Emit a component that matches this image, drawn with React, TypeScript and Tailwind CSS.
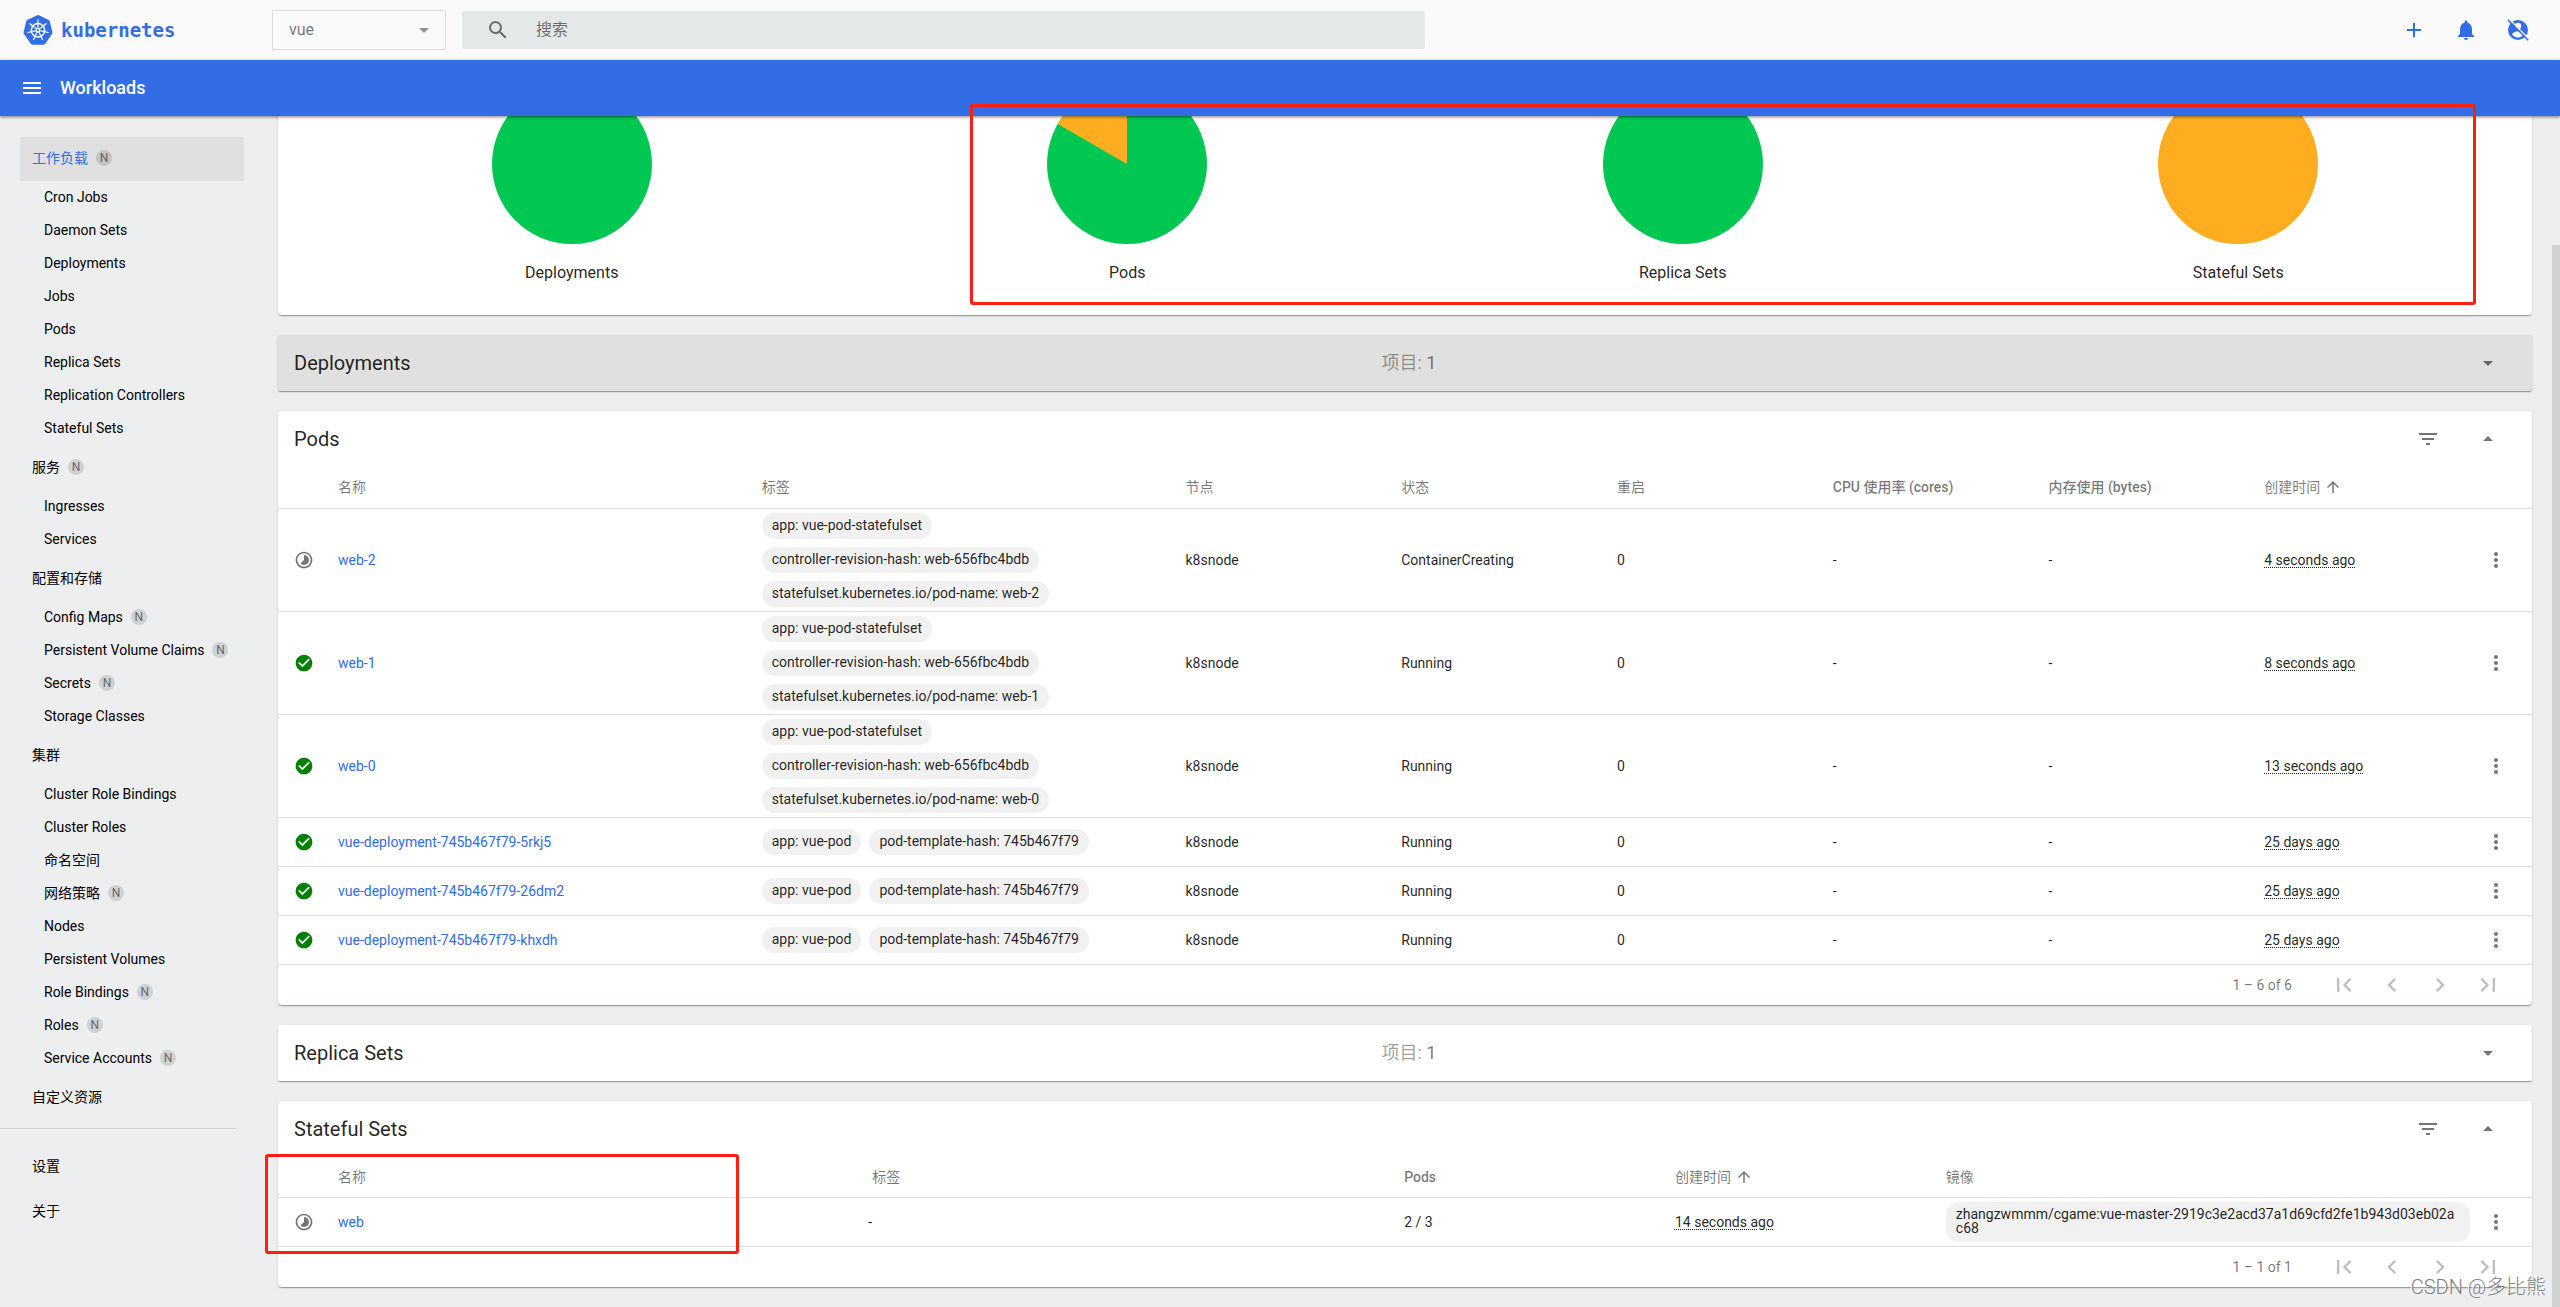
import type { ReactNode } from "react";
import {
  MdAdd,
  MdArrowDropDown,
  MdArrowDropUp,
  MdArrowUpward,
  MdCheckCircle,
  MdChevronLeft,
  MdChevronRight,
  MdFilterList,
  MdFirstPage,
  MdLastPage,
  MdMenu,
  MdMoreVert,
  MdNotifications,
  MdSearch,
  MdTimelapse,
} from "react-icons/md";

type NavItem = { label: string; namespaced?: boolean };
type NavGroup = NavItem & { active?: boolean; items: NavItem[] };

const navGroups: NavGroup[] = [
  {
    label: "工作负载",
    namespaced: true,
    active: true,
    items: [
      { label: "Cron Jobs" },
      { label: "Daemon Sets" },
      { label: "Deployments" },
      { label: "Jobs" },
      { label: "Pods" },
      { label: "Replica Sets" },
      { label: "Replication Controllers" },
      { label: "Stateful Sets" },
    ],
  },
  {
    label: "服务",
    namespaced: true,
    items: [{ label: "Ingresses" }, { label: "Services" }],
  },
  {
    label: "配置和存储",
    items: [
      { label: "Config Maps", namespaced: true },
      { label: "Persistent Volume Claims", namespaced: true },
      { label: "Secrets", namespaced: true },
      { label: "Storage Classes" },
    ],
  },
  {
    label: "集群",
    items: [
      { label: "Cluster Role Bindings" },
      { label: "Cluster Roles" },
      { label: "命名空间" },
      { label: "网络策略", namespaced: true },
      { label: "Nodes" },
      { label: "Persistent Volumes" },
      { label: "Role Bindings", namespaced: true },
      { label: "Roles", namespaced: true },
      { label: "Service Accounts", namespaced: true },
    ],
  },
  { label: "自定义资源", items: [] },
];

const charts = [
  { label: "Deployments", pending: 0 },
  { label: "Pods", pending: 1 / 6 },
  { label: "Replica Sets", pending: 0 },
  { label: "Stateful Sets", pending: 1 },
];

const statefulLabels = (name: string) => [
  "app: vue-pod-statefulset",
  "controller-revision-hash: web-656fbc4bdb",
  `statefulset.kubernetes.io/pod-name: ${name}`,
];
const deploymentLabels = ["app: vue-pod", "pod-template-hash: 745b467f79"];

const pods = [
  { name: "web-2", labels: statefulLabels("web-2"), stacked: true, status: "ContainerCreating", age: "4 seconds ago" },
  { name: "web-1", labels: statefulLabels("web-1"), stacked: true, status: "Running", age: "8 seconds ago" },
  { name: "web-0", labels: statefulLabels("web-0"), stacked: true, status: "Running", age: "13 seconds ago" },
  { name: "vue-deployment-745b467f79-5rkj5", labels: deploymentLabels, status: "Running", age: "25 days ago" },
  { name: "vue-deployment-745b467f79-26dm2", labels: deploymentLabels, status: "Running", age: "25 days ago" },
  { name: "vue-deployment-745b467f79-khxdh", labels: deploymentLabels, status: "Running", age: "25 days ago" },
];

const cardShadow =
  "shadow-[0_2px_1px_-1px_rgba(0,0,0,0.2),0_1px_1px_0_rgba(0,0,0,0.14),0_1px_3px_0_rgba(0,0,0,0.12)]";

function KubernetesLogo() {
  const spokes = [0, 1, 2, 3, 4, 5, 6];
  return (
    <svg viewBox="0 0 30 30" className="size-[30px]" aria-hidden="true">
      <path
        d="M13.6 0.4Q15 -0.2 16.4 0.4L25.3 4.7Q26.5 5.3 26.9 6.7L29.3 16.7Q29.7 18.1 28.8 19.3L22.4 28.5Q21.5 29.7 20 29.7H10Q8.5 29.7 7.6 28.5L1.2 19.3Q0.3 18.1 0.7 16.7L3.1 6.7Q3.5 5.3 4.7 4.7Z"
        fill="#326de6"
      />
      <g fill="none" stroke="#fff" strokeLinecap="round">
        <circle cx="15" cy="15.2" r="6.7" strokeWidth="1.5" />
        {spokes.map((n) => (
          <path key={n} d="M15 13V4.8" strokeWidth="1.2" transform={`rotate(${(n * 360) / 7} 15 15.2)`} />
        ))}
        <circle cx="15" cy="15.2" r="1.7" strokeWidth="1.2" />
      </g>
    </svg>
  );
}

function UserOffIcon() {
  return (
    <svg viewBox="0 0 24 24" className="size-6" aria-hidden="true">
      <circle cx="12" cy="12" r="10" fill="#326de6" />
      <circle cx="12" cy="8" r="3.2" fill="#fafafa" />
      <path d="M6 16.2c1-1.9 4-2.9 6-2.9s5 1 6 2.9a7.2 7.2 0 0 1-12 0Z" fill="#fafafa" />
      <path d="M3.2 1.2 23.2 21.2" stroke="#fafafa" strokeWidth="1.6" />
      <path d="M1.8 1.8 22.2 22.2" stroke="#326de6" strokeWidth="1.6" />
    </svg>
  );
}

function NamespacedBadge() {
  return (
    <span className="ml-2 flex size-4 items-center justify-center rounded-full bg-black/12 text-xs leading-none text-black/54">
      N
    </span>
  );
}

function Sidebar() {
  return (
    <nav className="w-[258px] shrink-0 pt-5 text-sm text-black">
      {navGroups.map((group) => (
        <div key={group.label}>
          <a
            href="#"
            className={
              group.active
                ? "mt-px ml-5 mr-[14px] flex h-11 items-center rounded-xs bg-[#e0e0e0] pb-0.5 pl-3 text-[#326de6]"
                : "mt-px ml-5 mr-[14px] flex h-11 items-center pb-0.5 pl-3"
            }
          >
            {group.label}
            {group.namespaced && <NamespacedBadge />}
          </a>
          {group.items.map((item) => (
            <a key={item.label} href="#" className="flex h-[33px] items-center pb-0.5 pl-11">
              {item.label}
              {item.namespaced && <NamespacedBadge />}
            </a>
          ))}
        </div>
      ))}
      <hr className="mt-2 mr-[22px] mb-[14px] border-black/12" />
      <a href="#" className="flex h-[45px] items-center pl-8">设置</a>
      <a href="#" className="flex h-[45px] items-center pl-8">关于</a>
    </nav>
  );
}

function Pie({ pending }: { pending: number }) {
  const angle = -pending * 2 * Math.PI;
  const x = 80 + 80 * Math.sin(angle);
  const y = 80 - 80 * Math.cos(angle);
  return (
    <svg viewBox="0 0 160 160" className="size-40" aria-hidden="true">
      <circle cx="80" cy="80" r="80" fill={pending === 1 ? "#ffad20" : "#00c752"} />
      {pending > 0 && pending < 1 && <path d={`M80 80V0A80 80 0 0 0 ${x} ${y}Z`} fill="#ffad20" />}
    </svg>
  );
}

function Chip({ children }: { children: ReactNode }) {
  return (
    <span className="rounded-[13px] bg-[#f1f1f1] px-[10px] pt-[5px] pb-[7px] leading-[14px] break-all">
      {children}
    </span>
  );
}

function StatusIcon({ pending }: { pending: boolean }) {
  return pending ? (
    <MdTimelapse className="size-5 text-black/54" />
  ) : (
    <MdCheckCircle className="size-5 text-[#008000]" />
  );
}

function CollapsedCard({ title, hovered }: { title: string; hovered?: boolean }) {
  return (
    <section
      className={`flex h-14 shrink-0 items-center rounded-xs px-4 ${cardShadow} ${hovered ? "bg-[#e0e0e0]" : "bg-white"}`}
    >
      <h2 className="flex-1 text-xl">{title}</h2>
      <p className="ml-2 text-lg text-black/54">
        <span className="text-black/40">项目:</span> 1
      </p>
      <div className="flex flex-1 justify-end">
        <button type="button" aria-label={`展开 ${title}`} className="mr-4">
          <MdArrowDropDown className="size-6 text-black/54" />
        </button>
      </div>
    </section>
  );
}

function TableCard({ title, range, children }: { title: string; range: string; children: ReactNode }) {
  return (
    <section className={`shrink-0 rounded bg-white ${cardShadow}`}>
      <header className="flex h-14 items-center justify-between pr-8 pl-4">
        <h2 className="text-xl">{title}</h2>
        <div className="flex gap-9 text-black/54">
          <button type="button" aria-label="筛选">
            <MdFilterList className="size-6" />
          </button>
          <button type="button" aria-label={`收起 ${title}`}>
            <MdArrowDropUp className="size-6" />
          </button>
        </div>
      </header>
      {children}
      <footer className="flex h-10 items-center justify-end gap-5 pr-[30px] text-black/26">
        <span className="mr-[18px] text-sm text-black/54">{range}</span>
        <button type="button" aria-label="第一页">
          <MdFirstPage className="size-7" />
        </button>
        <button type="button" aria-label="上一页">
          <MdChevronLeft className="size-7" />
        </button>
        <button type="button" aria-label="下一页">
          <MdChevronRight className="size-7" />
        </button>
        <button type="button" aria-label="最后一页">
          <MdLastPage className="size-7" />
        </button>
      </footer>
    </section>
  );
}

function CreatedHeading() {
  return (
    <span className="flex items-center gap-1">
      创建时间
      <MdArrowUpward className="size-[18px]" />
    </span>
  );
}

function Age({ children }: { children: ReactNode }) {
  return <span className="underline decoration-dotted decoration-1 underline-offset-2">{children}</span>;
}

function MoreButton({ name }: { name: string }) {
  return (
    <button type="button" aria-label={`${name} 操作`} className="ml-1 block">
      <MdMoreVert className="size-6 text-black/54" />
    </button>
  );
}

function PodsTable() {
  return (
    <table className="w-full table-fixed text-left text-sm">
      <colgroup>
        <col className="w-[60px]" />
        <col className="w-[18.8%]" />
        <col className="w-[18.8%]" />
        <col span={6} />
        <col className="w-[52px]" />
      </colgroup>
      <thead>
        <tr className="h-[41px] border-b border-black/12 text-black/54">
          <td />
          <th className="font-normal">名称</th>
          <th className="font-normal">标签</th>
          <th className="font-normal">节点</th>
          <th className="font-normal">状态</th>
          <th className="font-normal">重启</th>
          <th className="font-medium">CPU 使用率 (cores)</th>
          <th className="font-medium">内存使用 (bytes)</th>
          <th className="font-normal">
            <CreatedHeading />
          </th>
          <td />
        </tr>
      </thead>
      <tbody>
        {pods.map((pod) => (
          <tr key={pod.name} className="h-[49px] border-b border-black/12">
            <td className="pl-4">
              <StatusIcon pending={pod.status !== "Running"} />
            </td>
            <td>
              <a href="#" className="text-[#326de6]">
                {pod.name}
              </a>
            </td>
            <td className="py-1">
              <div className={pod.stacked ? "flex flex-col items-start gap-2" : "flex gap-2"}>
                {pod.labels.map((label) => (
                  <Chip key={label}>{label}</Chip>
                ))}
              </div>
            </td>
            <td>k8snode</td>
            <td>{pod.status}</td>
            <td>0</td>
            <td>-</td>
            <td>-</td>
            <td>
              <Age>{pod.age}</Age>
            </td>
            <td>
              <MoreButton name={pod.name} />
            </td>
          </tr>
        ))}
      </tbody>
    </table>
  );
}

function StatefulSetsTable() {
  return (
    <table className="w-full table-fixed text-left text-sm">
      <colgroup>
        <col className="w-[60px]" />
        <col className="w-[23.7%]" />
        <col className="w-[23.6%]" />
        <col span={2} />
        <col className="w-[23.7%]" />
        <col className="w-[52px]" />
      </colgroup>
      <thead>
        <tr className="h-[41px] border-b border-black/12 text-black/54">
          <td />
          <th className="font-normal">名称</th>
          <th className="font-normal">标签</th>
          <th className="font-medium">Pods</th>
          <th className="font-normal">
            <CreatedHeading />
          </th>
          <th className="font-normal">镜像</th>
          <td />
        </tr>
      </thead>
      <tbody>
        <tr className="h-[49px] border-b border-black/12">
          <td className="pl-4">
            <StatusIcon pending />
          </td>
          <td>
            <a href="#" className="text-[#326de6]">
              web
            </a>
          </td>
          <td>
            <span className="-ml-1">-</span>
          </td>
          <td>2 / 3</td>
          <td>
            <Age>14 seconds ago</Age>
          </td>
          <td className="py-1 pr-[10px]">
            <div className="flex">
              <Chip>zhangzwmmm/cgame:vue-master-2919c3e2acd37a1d69cfd2fe1b943d03eb02ac68</Chip>
            </div>
          </td>
          <td>
            <MoreButton name="web" />
          </td>
        </tr>
      </tbody>
    </table>
  );
}

export default function App() {
  return (
    <div className="relative flex h-screen flex-col overflow-hidden bg-[#edeef0] font-[Roboto,'Noto_Sans_CJK_SC',sans-serif] text-black/87">
      <header className="flex h-[60px] shrink-0 items-center bg-[#fafafa]">
        <a href="#" className="flex w-[272px] shrink-0 items-center gap-2 pl-[23px] text-[#326de6]">
          <KubernetesLogo />
          <span className="font-['DejaVu_Sans_Mono',monospace] text-[19px] font-bold">kubernetes</span>
        </a>
        <div className="relative w-[174px] shrink-0">
          <select
            aria-label="命名空间"
            className="h-10 w-full appearance-none rounded-xs border border-black/12 pl-4 text-base text-black/54"
          >
            <option>vue</option>
          </select>
          <MdArrowDropDown className="pointer-events-none absolute top-2 right-[10px] size-6 text-black/42" />
        </div>
        <label className="ml-4 flex h-[38px] w-[963px] shrink items-center rounded-xs bg-[#e4e8e9] pl-6">
          <MdSearch className="size-6 shrink-0 text-black/54" />
          <input
            type="text"
            aria-label="搜索"
            placeholder="搜索"
            className="ml-[26px] w-full bg-transparent text-base outline-none placeholder:text-black/54"
          />
        </label>
        <div className="ml-auto flex gap-7 pr-[30px] text-[#326de6]">
          <button type="button" aria-label="创建">
            <MdAdd className="size-6" />
          </button>
          <button type="button" aria-label="通知">
            <MdNotifications className="size-6" />
          </button>
          <button type="button" aria-label="用户">
            <UserOffIcon />
          </button>
        </div>
      </header>

      <div className="z-10 flex h-14 shrink-0 items-center gap-4 bg-[#326de6] pl-5 text-white shadow-[0_1px_3px_rgba(0,0,0,0.5)]">
        <button type="button" aria-label="菜单">
          <MdMenu className="size-6" />
        </button>
        <h1 className="text-lg font-medium">Workloads</h1>
      </div>

      <div className="flex min-h-0 flex-1">
        <Sidebar />
        {/* the main pane is scrolled to its end */}
        <main className="flex min-w-0 flex-1 flex-col justify-end gap-5 overflow-hidden px-5 pb-5">
          <section className={`flex shrink-0 items-end rounded bg-white px-4 pb-[30px] ${cardShadow}`}>
            {charts.map((chart) => (
              <figure key={chart.label} className="flex flex-1 flex-col items-center gap-[17px]">
                <Pie pending={chart.pending} />
                <figcaption className="text-base">{chart.label}</figcaption>
              </figure>
            ))}
          </section>
          <CollapsedCard title="Deployments" hovered />
          <TableCard title="Pods" range="1 – 6 of 6">
            <PodsTable />
          </TableCard>
          <CollapsedCard title="Replica Sets" />
          <TableCard title="Stateful Sets" range="1 – 1 of 1">
            <StatefulSetsTable />
          </TableCard>
        </main>
        <div className="flex w-2 shrink-0 flex-col justify-end">
          <div className="h-[89.2%] bg-[#d0d1d3]" />
        </div>
      </div>

      {/* annotations */}
      <div className="pointer-events-none absolute top-[104px] left-[970px] z-20 h-[201px] w-[1506px] rounded-[3px] border-3 border-[#ff1e12]" />
      <div className="pointer-events-none absolute top-[1154px] left-[265px] z-20 h-[100px] w-[474px] rounded-[3px] border-3 border-[#ff1e12]" />
      <div className="pointer-events-none absolute right-[14px] bottom-1.5 z-20 text-xl font-light text-[#808080] [text-shadow:-1px_-1px_0_#fff]">
        CSDN @多比熊
      </div>
    </div>
  );
}
